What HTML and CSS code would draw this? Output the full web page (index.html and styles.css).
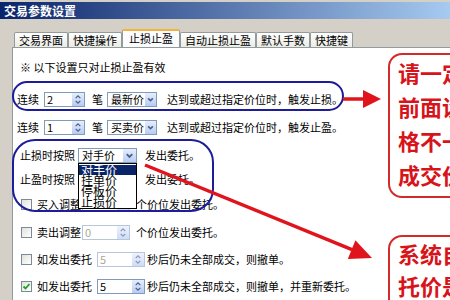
FILE: index.html
```html
<!doctype html>
<html lang="zh">
<head>
<meta charset="utf-8">
<title>交易参数设置</title>
<link rel="stylesheet" href="styles.css">
</head>
<body>

<header class="caption">交易参数设置</header>

<nav class="tabs">
	<span class="tab">交易界面</span>
	<span class="tab">快捷操作</span>
	<span class="tab tabOn">止损止盈</span>
	<span class="tab">自动止损止盈</span>
	<span class="tab">默认手数</span>
	<span class="tab">快捷键</span>
</nav>

<main class="panel">

	<p class="note">※ 以下设置只对止损止盈有效</p>

	<div class="row r1">
		<span>连续</span>
		<span class="spin sp1"><span class="val">2</span><svg class="updn" viewBox="0 0 13 13"><path d="M4 5 L6.5 2.5 L9 5 M4 8 L6.5 10.5 L9 8"/></svg></span>
		<span class="bi">笔</span>
		<span class="sel s1"><span class="val">最新价</span><svg class="dd" viewBox="0 0 14 13"><path d="M4 5 L7 8 L10 5"/></svg></span>
		<span class="txt1">达到或超过指定价位时，触发止损。</span>
	</div>

	<div class="row r2">
		<span>连续</span>
		<span class="spin sp1"><span class="val">1</span><svg class="updn" viewBox="0 0 13 13"><path d="M4 5 L6.5 2.5 L9 5 M4 8 L6.5 10.5 L9 8"/></svg></span>
		<span class="bi">笔</span>
		<span class="sel s1"><span class="val">买卖价</span><svg class="dd" viewBox="0 0 14 13"><path d="M4 5 L7 8 L10 5"/></svg></span>
		<span class="txt1">达到或超过指定价位时，触发止盈。</span>
	</div>

	<div class="row r3">
		<span>止损时按照</span>
		<span class="sel s2"><span class="val">对手价</span><svg class="dd" viewBox="0 0 14 13"><path d="M4 5 L7 8 L10 5"/></svg>
			<span class="ddList">
				<span class="opt optOn">对手价</span>
				<span class="opt">挂单价</span>
				<span class="opt">停板价</span>
				<span class="opt">止损价</span>
			</span>
		</span>
		<span class="txt3">发出委托。</span>
	</div>

	<div class="row r4">
		<span>止盈时按照</span>
		<span class="sel s2"><span class="val">对手价</span><svg class="dd" viewBox="0 0 14 13"><path d="M4 5 L7 8 L10 5"/></svg></span>
		<span class="txt3">发出委托。</span>
	</div>

	<div class="row r5">
		<span class="chk"></span>
		<span class="lbl">买入调整</span>
		<span class="spin sp2 off"><span class="val">0</span><svg class="updn" viewBox="0 0 13 13"><path d="M4 5 L6.5 2.5 L9 5 M4 8 L6.5 10.5 L9 8"/></svg></span>
		<span class="txt5">个价位发出委托。</span>
	</div>

	<div class="row r6">
		<span class="chk"></span>
		<span class="lbl">卖出调整</span>
		<span class="spin sp2 off"><span class="val">0</span><svg class="updn" viewBox="0 0 13 13"><path d="M4 5 L6.5 2.5 L9 5 M4 8 L6.5 10.5 L9 8"/></svg></span>
		<span class="txt5">个价位发出委托。</span>
	</div>

	<div class="row r7">
		<span class="chk"></span>
		<span class="lbl">如发出委托</span>
		<span class="spin sp3 off"><span class="val">5</span><svg class="updn" viewBox="0 0 13 13"><path d="M4 5 L6.5 2.5 L9 5 M4 8 L6.5 10.5 L9 8"/></svg></span>
		<span class="txt7">秒后仍未全部成交，则撤单。</span>
	</div>

	<div class="row r8">
		<span class="chk"><svg viewBox="0 0 9 9"><path d="M1.5 4.5 L3.5 6.5 L7.5 2"/></svg></span>
		<span class="lbl">如发出委托</span>
		<span class="spin sp3"><span class="val">5</span><svg class="updn" viewBox="0 0 13 13"><path d="M4 5 L6.5 2.5 L9 5 M4 8 L6.5 10.5 L9 8"/></svg></span>
		<span class="txt7">秒后仍未全部成交，则撤单，并重新委托。</span>
	</div>

</main>

<!-- annotations drawn over the dialog -->
<svg class="marks" width="450" height="300" viewBox="0 0 450 300">
	<rect class="blue" x="13" y="82" width="330" height="28" rx="14"/>
	<rect class="blue" x="13" y="140" width="200" height="71" rx="22"/>
	<line class="red" x1="343" y1="99" x2="366" y2="99"/>
	<polygon class="redFill" points="363,90 381,99 363,108"/>
	<line class="red" x1="145" y1="165" x2="352" y2="249.6"/>
	<polygon class="redFill" points="372,258 347.8,258.9 355.4,240.3"/>
</svg>

<div class="callout c1">请一定注意<br>前面设置的<br>格不一定是<br>成交价格</div>
<div class="callout c2">系统自动委<br>托价是对手</div>

</body>
</html>
```

FILE: styles.css
```css
* { box-sizing: border-box; }

body { margin: 0; width: 450px; height: 300px; overflow: hidden; position: relative;
	background-color: #d4d0c8; color: #000; font: 11px "Noto Sans CJK SC", sans-serif; }

p { margin: 0; }

.caption { margin-top: 2px; height: 17px; padding-left: 4px; background: linear-gradient( to right, #0a246a, #a6caf0 );
	color: #fff; font-size: 12px; font-weight: bold; line-height: 17px; }

/* tab strip */

.tabs { display: flex; align-items: flex-end; height: 28px; padding-left: 14px; }

.tab { height: 15px; padding: 0 4px; border: 1px solid #919b9c; border-bottom: none; border-radius: 2px 2px 0 0;
	background: linear-gradient( #fefefe, #ecebe5 ); line-height: 14px; }

.tabOn { height: 18px; padding: 0 6px; border-top: 2px solid #f6b13a; background: #fcfcfe; line-height: 15px; }

/* page */

.panel { display: flex; flex-direction: column; height: 253px; margin-left: 12px; padding-left: 4px;
	background-color: #fff; border-left: 1px solid #919b9c; border-top: 1px solid #919b9c; }

.note { height: 16px; margin-top: 11px; padding-left: 3px; line-height: 16px; }

.row { display: flex; align-items: center; height: 16px; white-space: nowrap; }

.r1 { margin-top: 16px; }
.r2 { margin-top: 12px; }
.r3 { margin-top: 12px; padding-left: 3px; }
.r4 { margin-top: 8px; padding-left: 3px; }
.r5 { margin-top: 9px; }
.r6 { margin-top: 12px; }
.r7 { margin-top: 11px; }
.r8 { margin-top: 11px; }

.bi { margin-left: 7px; }
.txt1 { margin-left: 10px; }
.txt3 { margin-left: 8px; }
.txt5 { margin-left: 6px; }
.txt7 { margin-left: 2px; }
.lbl { margin-left: 5px; }

/* controls */

.spin, .sel { display: flex; height: 15px; border: 1px solid #7f9db9; background-color: #fff; }

.val { flex: 1; padding-left: 2px; line-height: 13px; }

.updn, .dd { height: 13px; background: linear-gradient( #e6eefc, #b7cbf5 ); border-left: 1px solid #fff;
	fill: none; stroke: #4d6185; stroke-width: 1.4; }
.updn { width: 13px; }
.dd { width: 14px; stroke-width: 2; }

.sp1 { width: 41px; margin-left: 5px; }
.sp2 { width: 48px; margin-left: 1px; }
.sp3 { width: 48px; margin-left: 5px; }

.off { border-color: #b8c6dc; }
.off .val { color: #aca899; }
.off .updn { background: linear-gradient( #eef3fd, #cfdcf8 ); stroke: #8b9ab5; }

.s1 { width: 50px; margin-left: 4px; }
.s2 { width: 59px; margin-left: 3px; position: relative; }
.s1 .val, .s2 .val { padding-left: 3px; }

.ddList { position: absolute; z-index: 2; left: -1px; top: calc( 100% + 1px ); width: 59px; height: 46px;
	display: flex; flex-direction: column; padding-top: 1px; border: 1px solid #000; background-color: #fff; }

.opt { height: 11px; padding-left: 2px; font-size: 12px; line-height: 10px; overflow: visible; }
.optOn { background-color: #0a246a; color: #fff; }

.chk { width: 11px; height: 11px; margin-left: 4px; border: 1px solid #7a8a99;
	background: linear-gradient( 135deg, #e1e1db, #fff ); }
.chk svg { display: block; width: 9px; height: 9px; fill: none; stroke: #21a121; stroke-width: 1.8; }

/* annotations */

.marks { position: absolute; left: 0; top: 0; z-index: 3; }
.blue { fill: none; stroke: #1d1d9a; stroke-width: 2; }
.red { stroke: #e0141c; stroke-width: 3.5; }
.redFill { fill: #e0141c; }

.callout { position: absolute; z-index: 3; left: 388px; width: 90px; padding-left: 8px;
	border: 2px solid #d42a2a; border-radius: 14px; background-color: #fff; color: #d7141a;
	font: bold 22px/34px "Noto Sans CJK SC", sans-serif; white-space: nowrap; }
.c1 { top: 53px; height: 145px; }
.c2 { top: 235px; height: 90px; line-height: 32px; }
```
